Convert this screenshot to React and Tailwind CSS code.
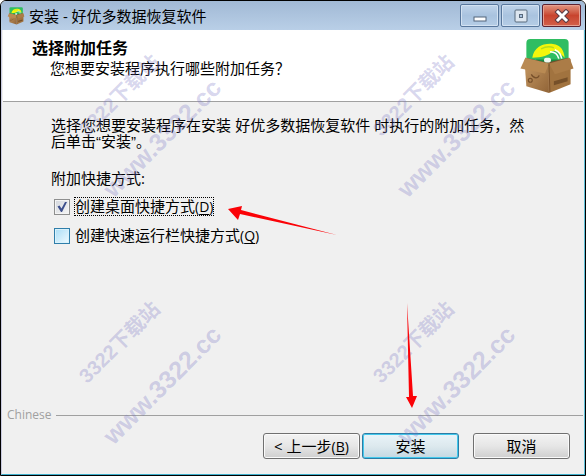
import { useState } from "react";

const watermarks = [
  { id: 1, pos: "left-[141px] top-[117px]" },
  { id: 2, pos: "left-[435px] top-[117px]" },
  { id: 3, pos: "left-[141px] top-[364px]" },
  { id: 4, pos: "left-[435px] top-[364px]" },
];

function BoxIcon({ className }) {
  return (
    <svg viewBox="0 0 56 58" className={className} aria-hidden="true">
      <defs>
        <linearGradient id="carton" x1="0" y1="0" x2="1" y2="1">
          <stop offset="0" stopColor="#c79a64" />
          <stop offset="1" stopColor="#916437" />
        </linearGradient>
      </defs>
      <rect x="7" y="1" width="43" height="34" rx="4" fill="#2fbd62" />
      <path d="M13 20C15 9 24 5 34 6c8 1 11 6 12 14-4-4-7-7-12-7-4 5-11 7-21 7Z" fill="#f3f60b" />
      <path d="M22 11c4-2 8-3 13-1" fill="none" stroke="#b6dc1c" strokeWidth="1.5" />
      <path d="M31 14c6 0 8 3 9 7M36 12c5 2 6 5 7 9" fill="none" stroke="#fff" strokeWidth="1.6" />
      <path d="M17 22h22v6H17z" fill="#178a43" />
      <path d="M6 20 28 25 50 20v8H6z" fill="#75502d" />
      <rect x="25" y="20" width="7" height="5" rx="2" fill="#eef8f0" />
      <path d="M5 22 30 28v28L7 49Z" fill="url(#carton)" />
      <path d="M30 28 52 21v26L30 56Z" fill="#a1733f" />
      <path d="M6 20 30 26l-4 10L1 31Z" fill="#b98a53" />
      <path d="M30 26 51 20l4 11-19 6Z" fill="#ab7c47" />
      <path d="m30 27 1 28" stroke="#7b512a" strokeWidth="1" />
      <circle cx="11" cy="43" r="2" fill="none" stroke="#77502b" strokeWidth="1.2" />
      <path d="M12 37c3 5 7 4 8 1" fill="none" stroke="#77502b" strokeWidth="1.3" />
      <path d="m35 44 14-4v4l-14 4z" fill="#765029" />
    </svg>
  );
}

function TitleBar() {
  const base =
    "flex h-[23px] w-[39px] items-center justify-center rounded-[2px] border border-[#58779c] bg-linear-to-b from-[#c0d4ea] via-[#a9c3df] to-[#b5cde6] shadow-[inset_0_0_0_1px_#d3e2f2]";
  return (
    <header className="flex h-[29px] items-center bg-linear-to-b from-[#a1b9d5] to-[#b9cfe7] pr-1 pl-[6px]">
      <BoxIcon className="h-[18px] w-[18px]" />
      <h1 className="ml-1 flex-1 text-[15px] leading-5">安装 - 好优多数据恢复软件</h1>
      <div className="flex gap-[2px]">
        <button type="button" aria-label="最小化" className={base}>
          <svg width="14" height="14" aria-hidden="true">
            <rect x="1" y="8" width="12" height="4" fill="#fff" stroke="#53657a" />
          </svg>
        </button>
        <button type="button" aria-label="最大化" className={base}>
          <svg width="14" height="14" aria-hidden="true">
            <rect x="1" y="1" width="12" height="12" rx="1" fill="#dde6f0" stroke="#596a7d" />
            <rect x="5.5" y="5.5" width="3" height="3" fill="#a9c3df" stroke="#596a7d" />
          </svg>
        </button>
        <button
          type="button"
          aria-label="关闭"
          className="flex h-[23px] w-[39px] items-center justify-center rounded-[2px] border border-[#5c2230] bg-linear-to-b from-[#e0947f] via-[#c8442e] to-[#d3604a] shadow-[inset_0_0_0_1px_#e6a191]"
        >
          <svg width="16" height="14" viewBox="0 0 16 14" aria-hidden="true">
            <path d="m4 3 8 8m0-8-8 8" stroke="#5b3d46" strokeWidth="5" strokeLinecap="square" />
            <path d="m4 3 8 8m0-8-8 8" stroke="#fff" strokeWidth="3" strokeLinecap="square" />
          </svg>
        </button>
      </div>
    </header>
  );
}

function Task({ id, label, hotkey, checked, focused, onChange }) {
  return (
    <div className="flex items-center gap-1">
      <span className="grid">
        <input
          id={id}
          type="checkbox"
          checked={checked}
          onChange={onChange}
          className="peer col-start-1 row-start-1 h-4 w-4 appearance-none border border-[#2f7eaa] bg-linear-to-br from-[#a9ddf6] to-[#eefaff] shadow-[inset_0_0_0_1px_#d9f2fc] checked:border-[#8e8f8f] checked:from-[#d3d7dd] checked:to-[#f6f6f6] checked:shadow-[inset_0_0_0_1px_#f4f4f4]"
        />
        <svg
          viewBox="0 0 16 16"
          className="pointer-events-none invisible col-start-1 row-start-1 h-4 w-4 peer-checked:visible"
          aria-hidden="true"
        >
          <path d="m3.500 7.500 2-1 2 3 3.500-6.500h2L8 13H7Z" fill="#3d4f8c" />
        </svg>
      </span>
      <label
        htmlFor={id}
        className={
          focused
            ? "border border-dotted border-black text-[15px] leading-4"
            : "border border-transparent text-[15px] leading-4"
        }
      >
        {label}
        <span className="text-[14px]">
          (<u className="underline-offset-2">{hotkey}</u>)
        </span>
      </label>
    </div>
  );
}

function Watermark({ pos }) {
  return (
    <div
      className={`absolute flex -translate-x-1/2 -translate-y-1/2 -rotate-45 flex-col items-center gap-8 font-['Liberation_Sans','Noto_Sans_CJK_SC',sans-serif] font-bold whitespace-nowrap text-[#7a75c4]/30 ${pos}`}
    >
      <span className="text-[20px] leading-6">3322下载站</span>
      <span className="text-[25px] leading-8">www.3322.cc</span>
    </div>
  );
}

export default function App() {
  const [desktop, setDesktop] = useState(true);
  const [quick, setQuick] = useState(false);
  const button =
    "h-[26px] w-[97px] rounded-[3px] border border-[#707070] bg-linear-to-b from-[#f3f3f3] via-[#e6e6e6] to-[#cfcfcf] text-[15px] leading-4 shadow-[inset_0_0_0_1px_#fafafa]";

  return (
    <div className="relative flex min-h-screen flex-col overflow-hidden rounded-t-md border border-black bg-[#f0f0f0] font-['Open_Sans','Noto_Sans_CJK_SC',sans-serif] text-black">
      <TitleBar />
      <div className="flex flex-1 flex-col border-x border-b border-r-[#5fc0d8] border-b-[#3fb0cc] border-l-[#c9cbe0] px-px">
        <section className="flex h-[72px] justify-between border-b border-[#a0a0a0] bg-white pr-2 pl-[29px]">
          <div className="pt-2">
            <h2 className="text-[16px] leading-5 font-bold">选择附加任务</h2>
            <p className="pl-[18px] text-[15px] leading-5">您想要安装程序执行哪些附加任务？</p>
          </div>
          <BoxIcon className="mt-2 h-[57px] w-[56px]" />
        </section>

        <main className="flex-1 pt-4 pr-[50px] pl-12">
          <p className="font-['Liberation_Sans','Noto_Sans_CJK_SC',sans-serif] text-[15px] leading-4">
            选择您想要安装程序在安装 好优多数据恢复软件 时执行的附加任务，然后单击“安装”。
          </p>
          <fieldset className="mt-5">
            <legend className="text-[15px] leading-4">附加快捷方式:</legend>
            <div className="mt-[11px] flex flex-col gap-[10px] pl-[3px]">
              <Task
                id="desktop"
                label="创建桌面快捷方式"
                hotkey="D"
                focused
                checked={desktop}
                onChange={(e) => setDesktop(e.target.checked)}
              />
              <Task
                id="quick"
                label="创建快速运行栏快捷方式"
                hotkey="Q"
                checked={quick}
                onChange={(e) => setQuick(e.target.checked)}
              />
            </div>
          </fieldset>
        </main>

        <footer className="pb-[15px]">
          <div className="flex items-center gap-1 pl-1">
            <span className="text-[12px] leading-5 text-[#a0a0a0]">Chinese</span>
            <span className="h-px flex-1 bg-[#a0a0a0]" />
          </div>
          <div className="mt-2 flex justify-end pr-[13px]">
            <button type="button" className={button}>
              &lt; 上一步
              <span className="text-[14px]">
                (<u className="underline-offset-2">B</u>)
              </span>
            </button>
            <button
              type="button"
              className="ml-[2px] h-[26px] w-[97px] rounded-[3px] border border-[#2c7ca5] bg-linear-to-b from-[#e9f4f9] via-[#dde9ee] to-[#c4d8e2] text-[15px] leading-4 shadow-[inset_0_0_0_1px_#42c8ec]"
            >
              安装
            </button>
            <button type="button" className={`ml-[14px] ${button}`}>
              取消
            </button>
          </div>
        </footer>
      </div>

      <div className="pointer-events-none absolute inset-0">
        {watermarks.map((w) => (
          <Watermark key={w.id} pos={w.pos} />
        ))}
        <svg className="absolute top-[204px] left-[226px]" width="112" height="34" aria-hidden="true">
          <path d="M1 4 15 1l-1 4 96 25L13 9l-2 6Z" fill="#fb0207" />
        </svg>
        <svg className="absolute top-[302px] left-[404px]" width="14" height="106" aria-hidden="true">
          <path d="M2 0 8 93h4L7 105 1 94h3Z" fill="#fb0207" />
        </svg>
      </div>
    </div>
  );
}
